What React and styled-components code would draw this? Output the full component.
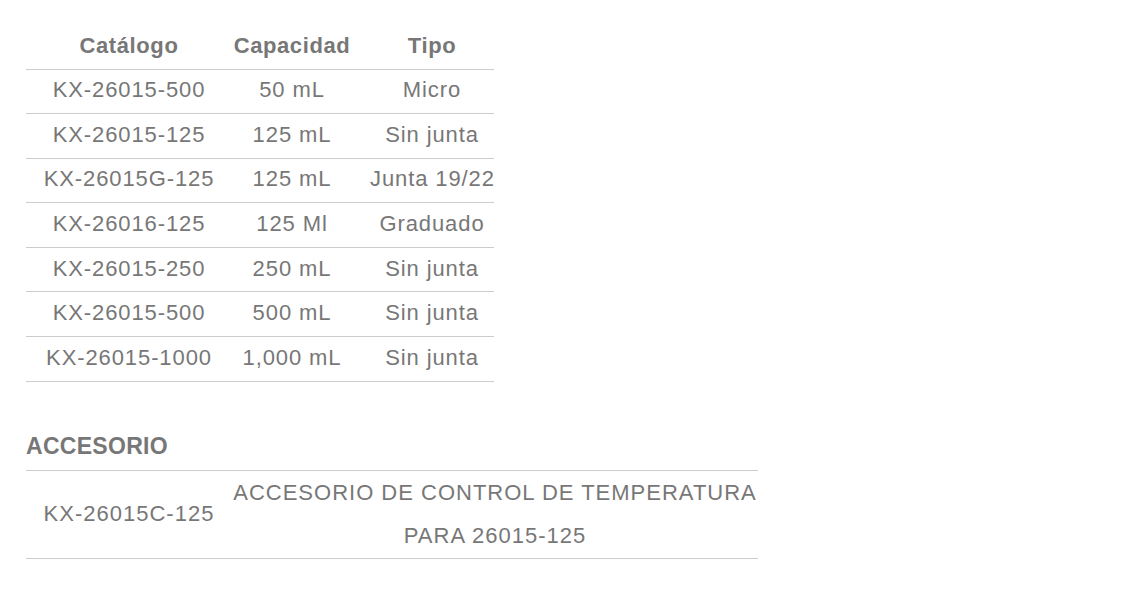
import React from "react";
import styled, { createGlobalStyle } from "styled-components";

const Global = createGlobalStyle`
  html, body { margin: 0; padding: 0; background: #fff; }
  body { font-family: "Liberation Sans", Arial, sans-serif; color: #777; }
`;

const Page = styled.div`
  padding: 24px 26px;
  display: flex;
  flex-direction: column;
  align-items: flex-start;
`;

const Table = styled.table`
  border-collapse: collapse;
  table-layout: fixed;
  width: 468px;
  font-size: 22px;
  letter-spacing: 0.9px;
  color: #777;
`;

const Col = styled.col`
  width: ${(p) => p.$w}px;
`;

const Th = styled.th`
  box-sizing: border-box;
  font-weight: bold;
  text-align: center;
  height: 45px;
  padding: 0 0 1px ${(p) => (p.$indent ? 18 : 0)}px;
  border-bottom: 1px solid #ccc;
  vertical-align: middle;
  white-space: nowrap;
  letter-spacing: 0.6px;
`;

const Td = styled.td`
  box-sizing: border-box;
  text-align: center;
  height: 44.6px;
  padding: 0 0 2px ${(p) => (p.$indent ? 18 : 0)}px;
  border-bottom: 1px solid #ccc;
  white-space: nowrap;
  vertical-align: middle;
`;

const Heading = styled.h3`
  margin: 52px 0 12px;
  font-size: 23px;
  letter-spacing: 0.3px;
  font-weight: bold;
  color: #777;
  line-height: 24px;
`;

const AccTable = styled.table`
  border-collapse: collapse;
  table-layout: fixed;
  font-size: 22px;
  letter-spacing: 1px;
  color: #777;
  border-top: 1px solid #ccc;
`;

const AccTd = styled.td`
  text-align: center;
  padding: 0 0 1px;
  line-height: 43px;
  border-bottom: 1px solid #ccc;
  vertical-align: middle;
  white-space: nowrap;
`;

const rows = [
  ["KX-26015-500", "50 mL", "Micro"],
  ["KX-26015-125", "125 mL", "Sin junta"],
  ["KX-26015G-125", "125 mL", "Junta 19/22"],
  ["KX-26016-125", "125 Ml", "Graduado"],
  ["KX-26015-250", "250 mL", "Sin junta"],
  ["KX-26015-500", "500 mL", "Sin junta"],
  ["KX-26015-1000", "1,000 mL", "Sin junta"],
];

export default function App() {
  return (
    <>
      <Global />
      <Page>
        <Table>
          <colgroup>
            <Col $w={206} />
            <Col $w={120} />
            <Col $w={142} />
          </colgroup>
          <thead>
            <tr>
              <Th>Catálogo</Th>
              <Th>Capacidad</Th>
              <Th $indent>Tipo</Th>
            </tr>
          </thead>
          <tbody>
            {rows.map((r, i) => (
              <tr key={i}>
                <Td>{r[0]}</Td>
                <Td>{r[1]}</Td>
                <Td $indent>{r[2]}</Td>
              </tr>
            ))}
          </tbody>
        </Table>
        <Heading>ACCESORIO</Heading>
        <AccTable>
          <colgroup>
            <Col $w={206} />
            <Col $w={526} />
          </colgroup>
          <tbody>
            <tr>
              <AccTd>KX-26015C-125</AccTd>
              <AccTd>
                ACCESORIO DE CONTROL DE TEMPERATURA
                <br />
                PARA 26015-125
              </AccTd>
            </tr>
          </tbody>
        </AccTable>
      </Page>
    </>
  );
}
